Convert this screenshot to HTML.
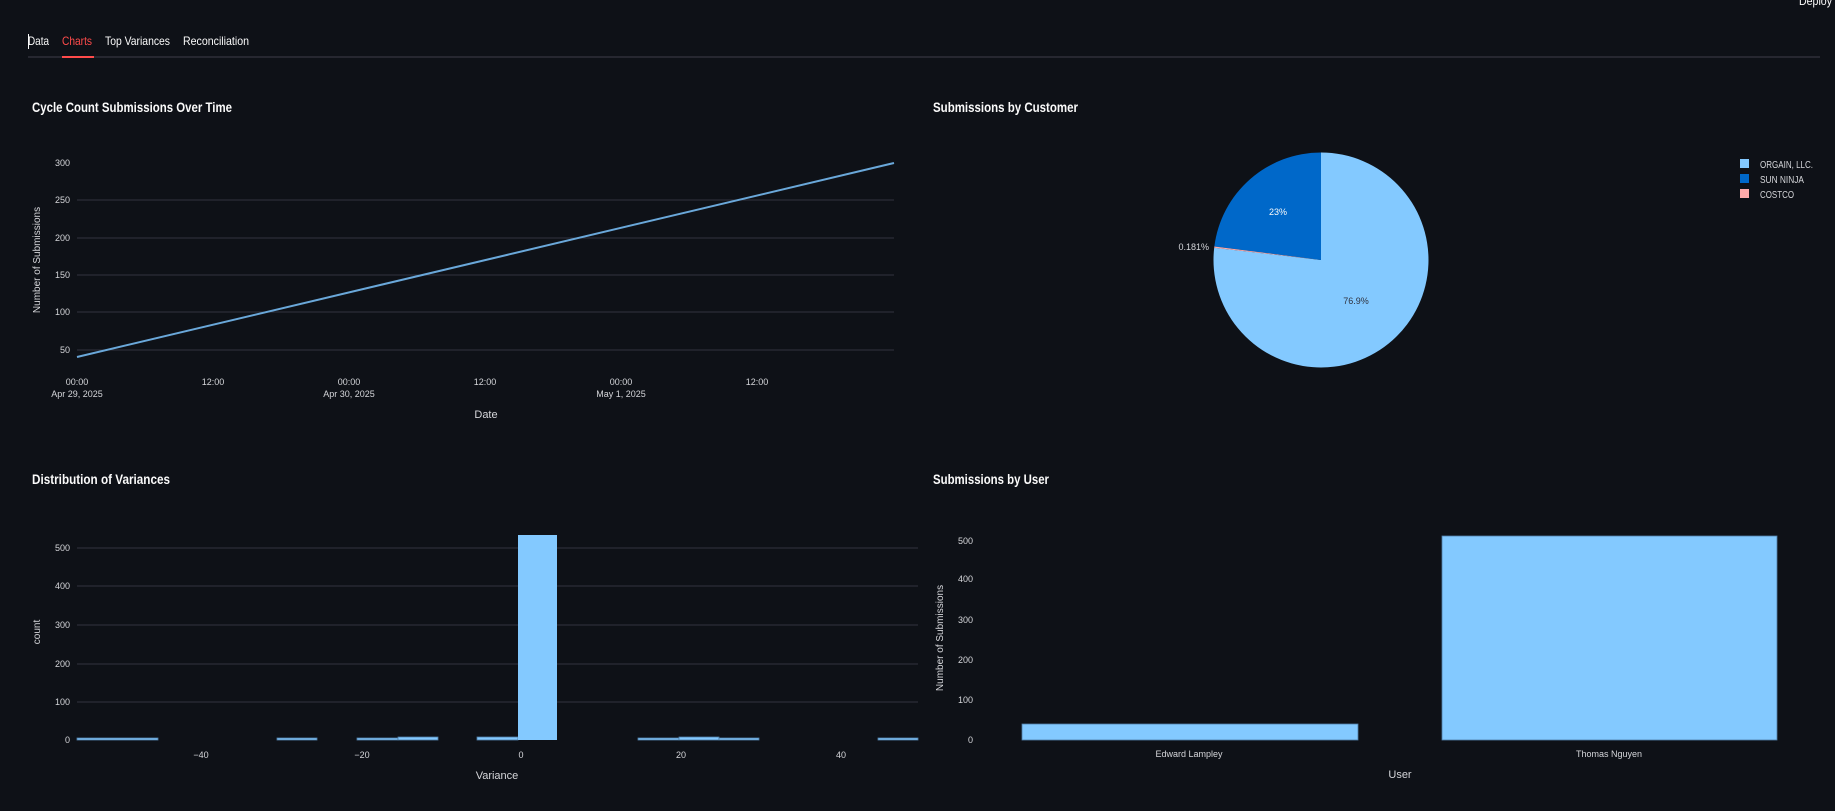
<!DOCTYPE html>
<html><head><meta charset="utf-8"><style>
html,body{margin:0;padding:0;background:#0e1117;width:1835px;height:811px;overflow:hidden}
svg{display:block}
text{font-family:"Liberation Sans",sans-serif}
</style></head><body>
<svg width="1835" height="811" viewBox="0 0 1835 811">
<rect width="1835" height="811" fill="#0e1117"/>
<text x="1799" y="5" font-size="12" fill="#fafafa" textLength="33" lengthAdjust="spacingAndGlyphs">Deploy</text>
<!-- tabs -->
<line x1="28.5" y1="34" x2="28.5" y2="49" stroke="#fafafa" stroke-width="1"/>
<g font-size="12" fill="#fafafa">
<text x="28" y="45" textLength="21" lengthAdjust="spacingAndGlyphs">Data</text>
<text x="62" y="45" fill="#ff4b4b" textLength="30" lengthAdjust="spacingAndGlyphs">Charts</text>
<text x="105" y="45" textLength="65" lengthAdjust="spacingAndGlyphs">Top Variances</text>
<text x="183" y="45" textLength="66" lengthAdjust="spacingAndGlyphs">Reconciliation</text>
</g>
<rect x="28" y="56" width="1792" height="2" fill="#262730"/>
<rect x="62" y="56" width="32" height="2" fill="#ff4b4b"/>

<!-- titles -->
<g font-size="14" font-weight="bold" fill="#fafafa">
<text x="32" y="112" textLength="200" lengthAdjust="spacingAndGlyphs">Cycle Count Submissions Over Time</text>
<text x="933" y="112" textLength="145" lengthAdjust="spacingAndGlyphs">Submissions by Customer</text>
<text x="32" y="484" textLength="138" lengthAdjust="spacingAndGlyphs">Distribution of Variances</text>
<text x="933" y="484" textLength="116" lengthAdjust="spacingAndGlyphs">Submissions by User</text>
</g>

<!-- chart 1 -->
<g stroke="#31333f" stroke-width="1">
<line x1="77" y1="200" x2="894" y2="200"/><line x1="77" y1="238" x2="894" y2="238"/>
<line x1="77" y1="275" x2="894" y2="275"/><line x1="77" y1="312" x2="894" y2="312"/>
<line x1="77" y1="350" x2="894" y2="350"/>
</g>
<g font-size="9" fill="#d5d6da" text-anchor="end">
<text x="70" y="166">300</text><text x="70" y="203">250</text><text x="70" y="241">200</text>
<text x="70" y="278">150</text><text x="70" y="315">100</text><text x="70" y="353">50</text>
</g>
<line x1="77" y1="357" x2="894" y2="163" stroke="#6aa8da" stroke-width="2"/>
<g font-size="9" fill="#d5d6da" text-anchor="middle">
<text x="77" y="385">00:00</text><text x="77" y="397">Apr 29, 2025</text>
<text x="213" y="385">12:00</text>
<text x="349" y="385">00:00</text><text x="349" y="397">Apr 30, 2025</text>
<text x="485" y="385">12:00</text>
<text x="621" y="385">00:00</text><text x="621" y="397">May 1, 2025</text>
<text x="757" y="385">12:00</text>
<text x="486" y="418" font-size="11">Date</text>
</g>
<text transform="translate(40,260) rotate(-90)" font-size="10" fill="#d5d6da" text-anchor="middle">Number of Submissions</text>

<!-- pie -->
<path d="M1321 260 L1214.2 247.7 A107.5 107.5 0 1 0 1321 152.5 Z" fill="#83c9ff"/>
<path d="M1321 260 L1321 152.5 A107.5 107.5 0 0 0 1214.35 246.5 Z" fill="#0068c9"/>
<path d="M1321 260 L1214.35 246.5 L1214.2 247.7 Z" fill="#ffabab"/>
<g font-size="9" text-anchor="middle">
<text x="1278" y="215" fill="#fafafa">23%</text>
<text x="1356" y="304" fill="#31333f">76.9%</text>
<text x="1209" y="250" fill="#d5d6da" text-anchor="end">0.181%</text>
</g>
<rect x="1740" y="159" width="9" height="9" fill="#83c9ff"/>
<rect x="1740" y="174" width="9" height="9" fill="#0068c9"/>
<rect x="1740" y="189" width="9" height="9" fill="#ffabab"/>
<g font-size="10" fill="#d5d6da">
<text x="1760" y="168" textLength="53" lengthAdjust="spacingAndGlyphs">ORGAIN, LLC.</text>
<text x="1760" y="183" textLength="44" lengthAdjust="spacingAndGlyphs">SUN NINJA</text>
<text x="1760" y="198" textLength="34" lengthAdjust="spacingAndGlyphs">COSTCO</text>
</g>

<!-- histogram -->
<g stroke="#31333f" stroke-width="1">
<line x1="77" y1="548" x2="918" y2="548"/><line x1="77" y1="586" x2="918" y2="586"/>
<line x1="77" y1="625" x2="918" y2="625"/><line x1="77" y1="664" x2="918" y2="664"/>
<line x1="77" y1="702" x2="918" y2="702"/>
</g>
<g font-size="9" fill="#d5d6da" text-anchor="end">
<text x="70" y="551">500</text><text x="70" y="589">400</text><text x="70" y="628">300</text>
<text x="70" y="667">200</text><text x="70" y="705">100</text><text x="70" y="743">0</text>
</g>
<g fill="#83c9ff" stroke="#4f7ea6" stroke-width="0.8">
<rect x="77" y="738" width="81" height="2"/>
<rect x="277" y="738" width="40" height="2"/>
<rect x="357" y="738" width="41" height="2"/>
<rect x="398" y="737" width="40" height="3"/>
<rect x="477" y="737" width="41" height="3"/>
<rect x="518" y="535" width="39" height="205" stroke="none"/>
<rect x="638" y="738" width="41" height="2"/>
<rect x="679" y="737" width="40" height="3"/>
<rect x="719" y="738" width="40" height="2"/>
<rect x="878" y="738" width="40" height="2"/>
</g>
<g font-size="9" fill="#d5d6da" text-anchor="middle">
<text x="201" y="758">−40</text><text x="362" y="758">−20</text><text x="521" y="758">0</text>
<text x="681" y="758">20</text><text x="841" y="758">40</text>
<text x="497" y="779" font-size="11">Variance</text>
</g>
<text transform="translate(40,632) rotate(-90)" font-size="10" fill="#d5d6da" text-anchor="middle">count</text>

<!-- bar chart -->
<g font-size="9" fill="#d5d6da" text-anchor="end">
<text x="973" y="544">500</text><text x="973" y="582">400</text><text x="973" y="623">300</text>
<text x="973" y="663">200</text><text x="973" y="703">100</text><text x="973" y="743">0</text>
</g>
<rect x="1022" y="724" width="336" height="16" fill="#83c9ff" stroke="#4f7ea6" stroke-width="0.8"/>
<rect x="1442" y="536" width="335" height="204" fill="#83c9ff" stroke="#4f7ea6" stroke-width="0.8"/>
<g font-size="9" fill="#d5d6da" text-anchor="middle">
<text x="1189" y="757">Edward Lampley</text>
<text x="1609" y="757">Thomas Nguyen</text>
<text x="1400" y="778" font-size="11">User</text>
</g>
<text transform="translate(943,638) rotate(-90)" font-size="10" fill="#d5d6da" text-anchor="middle">Number of Submissions</text>
</svg>
</body></html>
